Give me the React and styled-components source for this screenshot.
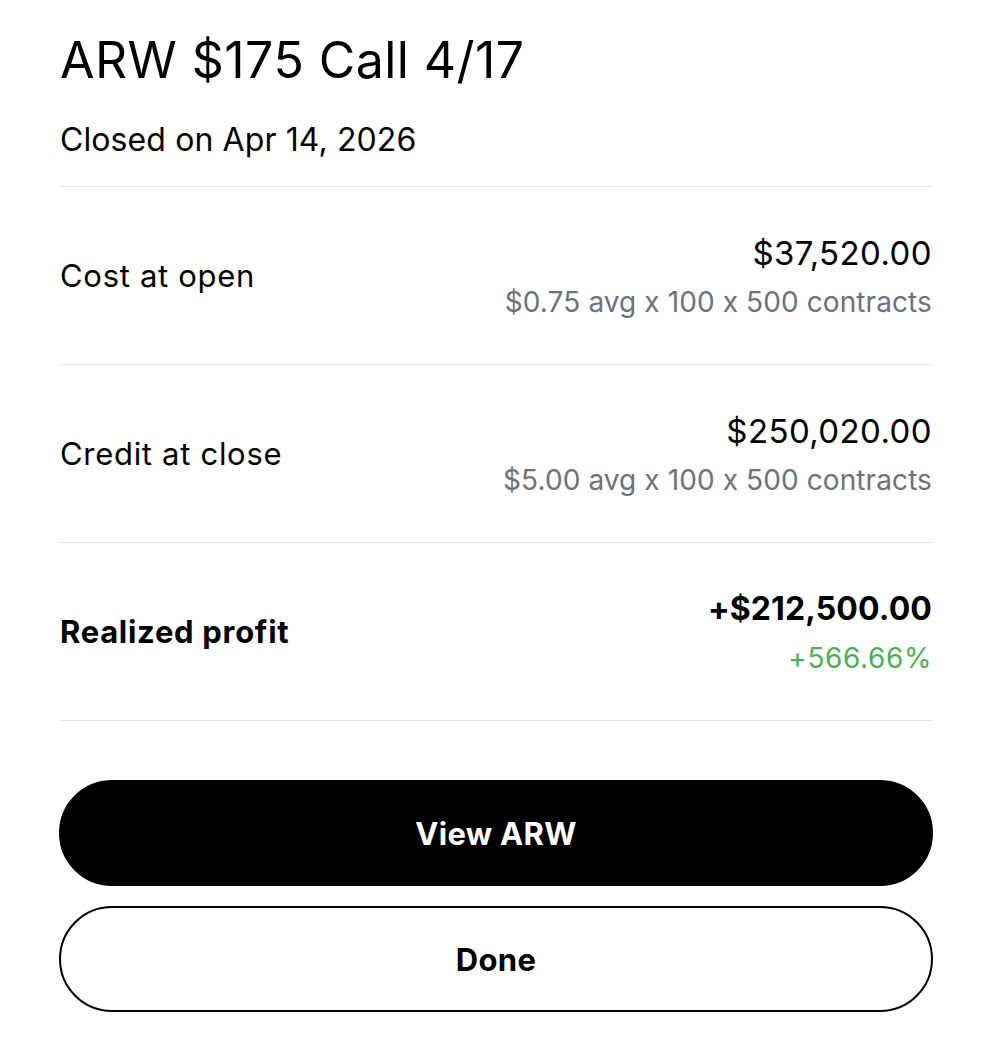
import React from "react";
import styled, { createGlobalStyle } from "styled-components";

const Global = createGlobalStyle`
  html, body { margin: 0; padding: 0; background: #ffffff; }
  body {
    font-family: Inter, "Noto Sans", "Liberation Sans", sans-serif;
    color: #000;
    font-feature-settings: "calt" 0;
  }
`;

const Sheet = styled.div`
  width: 872px;
  padding: 30px 60px 0 60px;
  display: flex;
  flex-direction: column;
`;

const Header = styled.header`
  display: flex;
  flex-direction: column;
  gap: 30px;
  padding-bottom: 26px;
  border-bottom: 1px solid #e6e6e6;
`;

const Title = styled.h1`
  margin: 0;
  font-size: 50px;
  line-height: 60px;
  font-weight: 400;
  letter-spacing: 0.45px;
`;

const Subtitle = styled.div`
  font-size: 32px;
  line-height: 40px;
  font-weight: 400;
  letter-spacing: 0.1px;
`;

const Row = styled.div`
  height: 177px;
  border-bottom: 1px solid #e6e6e6;
  display: flex;
  align-items: center;
  justify-content: space-between;
`;

const Label = styled.div`
  font-size: 31px;
  line-height: 38px;
  letter-spacing: 0.7px;
  font-weight: ${(p) => (p.$strong ? 700 : 400)};
`;

const Values = styled.div`
  display: flex;
  flex-direction: column;
  align-items: flex-end;
  gap: 12px;
`;

const Amount = styled.div`
  font-size: ${(p) => (p.$strong ? "32px" : "33px")};
  line-height: 40px;
  letter-spacing: ${(p) => (p.$strong ? "0.1px" : "0.4px")};
  font-weight: ${(p) => (p.$strong ? 700 : 400)};
`;

const Detail = styled.div`
  font-size: 28px;
  line-height: 34px;
  letter-spacing: ${(p) => (p.$positive ? "0.6px" : "0.1px")};
  color: ${(p) => (p.$positive ? "#4caf50" : "#6d727b")};
`;

const Actions = styled.div`
  display: flex;
  flex-direction: column;
  gap: 20px;
  margin: 59px -1px 0 -1px;
`;

const Button = styled.button`
  height: 106px;
  border-radius: 53px;
  border: 2px solid #000;
  background: ${(p) => (p.$primary ? "#000" : "#fff")};
  color: ${(p) => (p.$primary ? "#fff" : "#000")};
  font-family: Inter, "Noto Sans", "Liberation Sans", sans-serif;
  font-feature-settings: "calt" 0;
  font-size: 31px;
  letter-spacing: 0.3px;
  font-weight: 700;
  cursor: pointer;
`;

const rows = [
  { label: "Cost at open", amount: "$37,520.00", detail: "$0.75 avg x 100 x 500 contracts" },
  { label: "Credit at close", amount: "$250,020.00", detail: "$5.00 avg x 100 x 500 contracts" },
  { label: "Realized profit", amount: "+$212,500.00", detail: "+566.66%", strong: true, positive: true },
];

export default function App() {
  return (
    <>
      <Global />
      <Sheet>
        <Header>
          <Title>ARW $175 Call 4/17</Title>
          <Subtitle>Closed on Apr 14, 2026</Subtitle>
        </Header>
        {rows.map((r) => (
          <Row key={r.label}>
            <Label $strong={r.strong}>{r.label}</Label>
            <Values>
              <Amount $strong={r.strong}>{r.amount}</Amount>
              <Detail $positive={r.positive}>{r.detail}</Detail>
            </Values>
          </Row>
        ))}
        <Actions>
          <Button $primary>View ARW</Button>
          <Button>Done</Button>
        </Actions>
      </Sheet>
    </>
  );
}
